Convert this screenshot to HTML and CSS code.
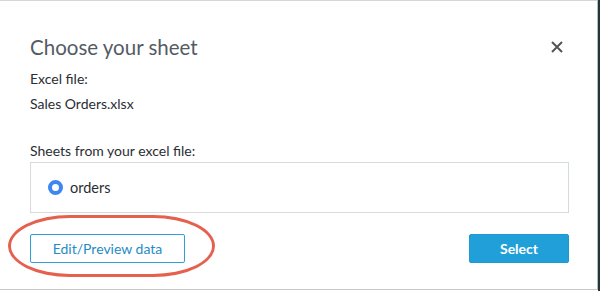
FILE: index.html
```html
<!DOCTYPE html>
<html>
<head>
<meta charset="utf-8">
<link rel="stylesheet" href="styles.css">
</head>
<body>
<div class="page">
  <div class="dialog">
    <div class="header">
      <h1 class="title">Choose your sheet</h1>
      <svg class="close" width="12" height="12" viewBox="0 0 12 12"><path d="M1 1 L11 11 M11 1 L1 11" stroke="#555" stroke-width="2" fill="none"/></svg>
    </div>
    <div class="label first">Excel file:</div>
    <div class="label file">Sales Orders.xlsx</div>
    <div class="label sheets">Sheets from your excel file:</div>
    <div class="sheetbox">
      <span class="radio"></span>
      <span class="sheetname">orders</span>
    </div>
    <div class="footer">
      <button class="btn secondary">Edit/Preview data</button>
      <button class="btn primary">Select</button>
      <div class="highlight"></div>
    </div>
  </div>
  <div class="edge"></div>
</div>
</body>
</html>
```
FILE: styles.css
```css
* { box-sizing: border-box; }
html, body { margin: 0; padding: 0; background: #fff; }
body { font-family: Lato, "Liberation Sans", sans-serif; color: #333; }
.page { width: 600px; height: 291px; display: flex; overflow: hidden; }
.dialog {
  width: 598px;
  height: 290px;
  border-top: 1px solid #d4d6d8;
  border-bottom: 1px solid #c8c8c8;
  border-right: 1px solid #b8bcbe;
  padding: 0 28px 0 30px;
  position: relative;
}
.edge { width: 2px; height: 291px; background: #26353c; }
.header { display: flex; justify-content: space-between; align-items: center; height: 24px; margin-top: 34px; }
.title { margin: 0; font-size: 20.5px; line-height: 24px; font-weight: 400; color: #545b64; }
.close { margin-right: 6px; }
.label { font-size: 14px; line-height: 20px; color: #2a2e33; }
.first { margin-top: 10px; }
.file { margin-top: 5px; }
.sheets { margin-top: 28px; line-height: 18px; }
.sheetbox {
  margin-top: 2px;
  height: 51px;
  border: 1px solid #d5dbdb;
  display: flex;
  align-items: center;
  padding-left: 17px;
}
.radio {
  width: 15px; height: 15px; border-radius: 50%;
  border: 4.5px solid #3f86f2;
  background: #fff;
  margin-right: 7px;
}
.sheetname { font-size: 14.5px; color: #2a2e33; }
.footer { display: flex; justify-content: space-between; margin-top: 21px; position: relative; }
.btn {
  height: 29px;
  font-family: Lato, "Liberation Sans", sans-serif;
  font-size: 14px;
  border-radius: 2px;
  padding: 0;
}
.secondary { width: 155px; background: #fff; border: 1px solid #2d9fd9; color: #1f8cc6; }
.primary { width: 100px; background: #209fd9; border: 1px solid #1e9ad3; color: #fff; font-weight: 700; }
.highlight {
  position: absolute;
  left: -22px; top: -19px;
  width: 207px; height: 62px;
  border: 3px solid #e6604e;
  border-radius: 62px / 31px;
}
```
